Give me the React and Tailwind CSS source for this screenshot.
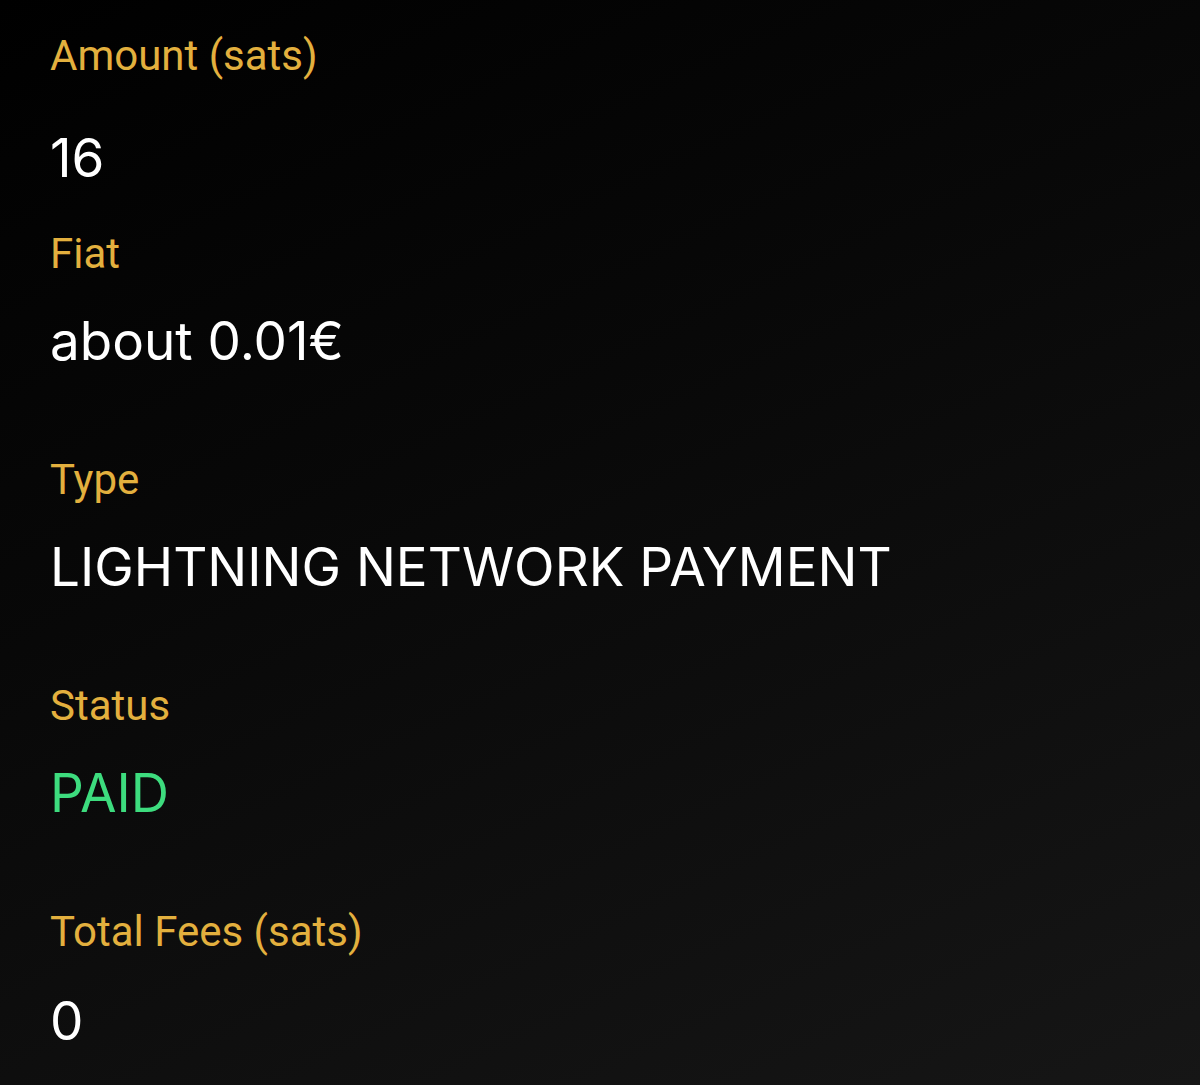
function Field({ label, value, valueColor = "text-white", labelMt = "", valueMt = "mt-[31px]" }) {
  return (
    <>
      <div className={`font-['Roboto','Noto_Sans',sans-serif] text-[42px] leading-[48px] text-[#e3b03e] ${labelMt}`}>
        {label}
      </div>
      <div className={`font-['Inter','Noto_Sans',sans-serif] text-[53px] leading-[64px] ${valueColor} ${valueMt}`}>
        {value}
      </div>
    </>
  );
}

export default function App() {
  return (
    <div className="w-[1200px] h-[1085px] overflow-hidden bg-[linear-gradient(155deg,#000000_0%,#080808_40%,#161616_100%)] pl-[50px] pt-[32px]">
      <div className="flex flex-col">
        <Field label="Amount (sats)" value="16" valueMt="mt-[46px]" />
        <Field label="Fiat" value="about 0.01€" labelMt="mt-[40px]" />
        <Field label="Type" value="LIGHTNING NETWORK PAYMENT" labelMt="mt-[83px]" />
        <Field label="Status" value="PAID" valueColor="text-[#3ddc7e]" labelMt="mt-[83px]" />
        <Field label="Total Fees (sats)" value="0" labelMt="mt-[83px]" valueMt="mt-[33px]" />
      </div>
    </div>
  );
}
